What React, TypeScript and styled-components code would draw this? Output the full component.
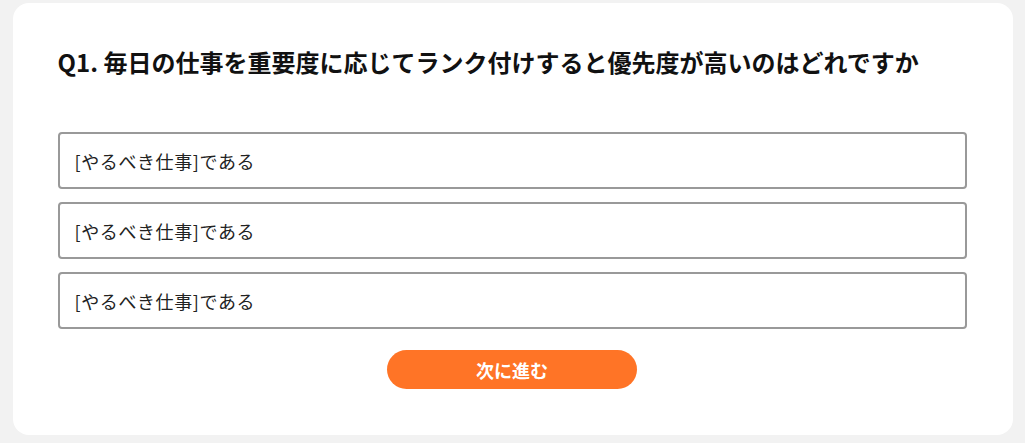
import styled, { createGlobalStyle } from "styled-components";

const GlobalStyle = createGlobalStyle`
  html,
  body {
    margin: 0;
    padding: 0;
    background: #f2f2f2;
  }
  body {
    font-family: "Noto Sans CJK JP", "Noto Sans", sans-serif;
    color: #1a1a1a;
  }
`;

const Page = styled.main`
  display: flex;
  justify-content: center;
  padding-top: 3px;
`;

const Card = styled.section`
  width: 1000px;
  box-sizing: border-box;
  background: #ffffff;
  border-radius: 16px;
  padding: 41px 46px 46px 45px;
  display: flex;
  flex-direction: column;
`;

const Question = styled.h1`
  margin: 0 0 52px;
  font-size: 24px;
  line-height: 36px;
  font-weight: 700;
  color: #111;
`;

const Options = styled.ul`
  list-style: none;
  margin: 0;
  padding: 0;
  display: flex;
  flex-direction: column;
  gap: 13px;
`;

const Option = styled.li<{ selected?: boolean }>`
  height: 57px;
  box-sizing: border-box;
  border: 2px solid ${({ selected }) => (selected ? "#ff7426" : "#999999")};
  border-radius: 4px;
  display: flex;
  align-items: center;
  padding: 0 15px;
  font-size: 18px;
  font-weight: 400;
  letter-spacing: 0.6px;
  color: #222;
  cursor: pointer;
`;

const NextButton = styled.button`
  align-self: center;
  margin-top: 21px;
  width: 250px;
  height: 39px;
  border: none;
  border-radius: 20px;
  background: #ff7426;
  color: #ffffff;
  font-family: inherit;
  font-size: 18px;
  font-weight: 700;
  cursor: pointer;
`;

const options = ["[やるべき仕事]である", "[やるべき仕事]である", "[やるべき仕事]である"];

export default function App() {
  return (
    <>
      <GlobalStyle />
      <Page>
        <Card>
          <Question>
            Q1. 毎日の仕事を重要度に応じてランク付けすると優先度が高いのはどれですか
          </Question>
          <Options>
            {options.map((label, i) => (
              <Option key={i}>{label}</Option>
            ))}
          </Options>
          <NextButton type="button">次に進む</NextButton>
        </Card>
      </Page>
    </>
  );
}
